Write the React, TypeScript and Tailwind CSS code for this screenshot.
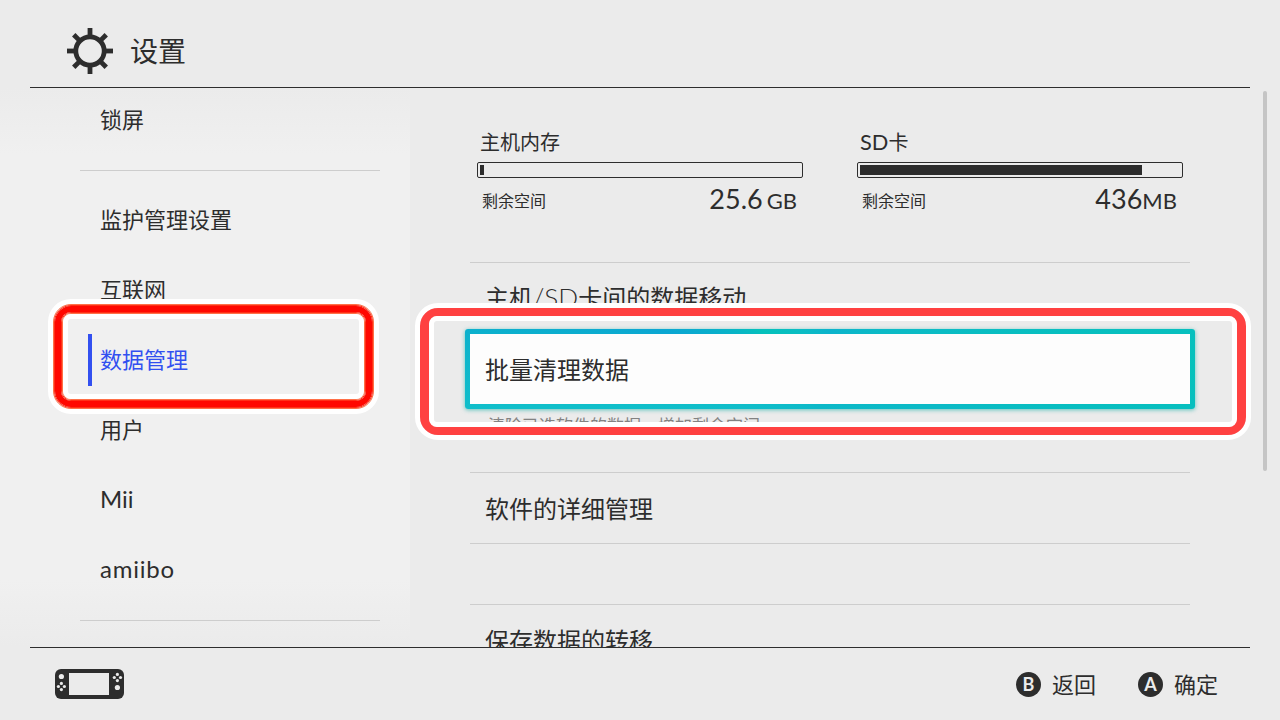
import type { ReactNode } from 'react';

function GearIcon() {
  return (
    <svg className="h-[48px] w-[48px] shrink-0" viewBox="-24 -24 48 48" fill="none" stroke="#2d2d2d">
      <circle r="14.2" strokeWidth="4.8" />
      {[0, 45, 90, 135, 180, 225, 270, 315].map((angle) => (
        <path key={angle} d="M0 -15V-23" strokeWidth="4.8" transform={`rotate(${angle})`} />
      ))}
    </svg>
  );
}

function ConsoleIcon() {
  return (
    <svg className="h-[30px] w-[69px]" viewBox="0 0 69 30">
      <rect width="69" height="30" rx="6" fill="#2d2d2d" />
      <rect x="14" y="4" width="40" height="22" fill="#ebebeb" />
      <g fill="#ebebeb">
        <circle cx="6.4" cy="7.5" r="2.6" />
        <circle cx="6.4" cy="14.4" r="1.6" />
        <circle cx="3.4" cy="17.5" r="1.6" />
        <circle cx="9.4" cy="17.5" r="1.6" />
        <circle cx="6.4" cy="20.6" r="1.6" />
        <circle cx="62.4" cy="18.5" r="2.6" />
        <circle cx="62.4" cy="5.4" r="1.6" />
        <circle cx="59.3" cy="8.5" r="1.6" />
        <circle cx="65.5" cy="8.5" r="1.6" />
        <circle cx="62.4" cy="11.6" r="1.6" />
      </g>
    </svg>
  );
}

function Latin({ children }: { children: ReactNode }) {
  return <span className="text-[1.09em] leading-none">{children}</span>;
}

function SideItem({ children, active = false }: { children: ReactNode; active?: boolean }) {
  return (
    <div className="flex h-[70px] items-center pl-2">
      <div
        className={
          active
            ? 'flex h-[52px] items-center border-l-4 border-[#3250f0] pb-[2px] pl-2 text-[22px] text-[#3250f0]'
            : 'flex h-[52px] items-center pb-[2px] pl-3 text-[22px]'
        }
      >
        {children}
      </div>
    </div>
  );
}

function Storage({ name, amount, unit, used, gap }: { name: ReactNode; amount: string; unit: string; used: number; gap: string }) {
  return (
    <div className="w-[326px]">
      <div className="h-[30px] pl-[3px] text-[20px] leading-[28px]">{name}</div>
      <div className="mt-[4px] h-4 rounded-[2px] border border-[#2d2d2d] px-[2px] py-[2px]">
        <div className="h-[10px] bg-[#2d2d2d]" style={{ width: used }} />
      </div>
      <div className="flex h-[42px] items-center justify-between pr-[6px] pl-[5px]">
        <span className="pt-[3px] text-[16px] leading-[24px]">剩余空间</span>
        <span className={`flex items-baseline pt-[2px] leading-[30px] ${gap}`}>
          <span className="text-[27px]">{amount}</span>
          <span className="text-[22px]">{unit}</span>
        </span>
      </div>
    </div>
  );
}

function PadHint({ button, label }: { button: string; label: string }) {
  return (
    <div className="flex items-center gap-[11px]">
      <span className="flex h-[25px] w-[25px] items-center justify-center rounded-full bg-[#2d2d2d] text-[18px] leading-none font-bold text-[#ebebeb]">
        {button}
      </span>
      <span className="text-[22px]">{label}</span>
    </div>
  );
}

export default function App() {
  return (
    <div className="relative flex h-[720px] w-[1280px] flex-col overflow-hidden bg-[#ebebeb] font-[Lato,'Noto_Sans_CJK_SC',sans-serif] text-[#2d2d2d]">
      <header className="mx-[30px] flex h-[88px] shrink-0 items-center border-b border-[#2d2d2d] pt-[14px] pl-9">
        <GearIcon />
        <h1 className="ml-4 text-[28px]">设置</h1>
      </header>

      <div className="flex h-[559px] shrink-0 overflow-hidden">
        <nav className="w-[410px] shrink-0 bg-[linear-gradient(to_bottom,#ebebeb,#f0f0f0_12%,#f0f0f0_88%,#ebebeb)] pr-[30px] pl-20">
          <div className="-mt-[3px] h-[86px] border-b border-[#cdcdcd]">
            <SideItem>锁屏</SideItem>
          </div>
          <div className="h-[450px] border-b border-[#cdcdcd] pt-[14px]">
            <SideItem>监护管理设置</SideItem>
            <SideItem>互联网</SideItem>
            <SideItem active>数据管理</SideItem>
            <SideItem>用户</SideItem>
            <SideItem><Latin>Mii</Latin></SideItem>
            <SideItem><span className="tracking-[0.8px]"><Latin>amiibo</Latin></span></SideItem>
          </div>
        </nav>

        <main className="w-[853px] shrink-0 pl-[60px]">
          <div className="w-[720px]">
            <section className="flex h-[175px] justify-between border-b border-[#cdcdcd] pt-[40px] pr-[7px] pl-[7px]">
              <Storage name="主机内存" amount="25.6" unit="GB" used={4} gap="gap-[4px]" />
              <Storage name={<><Latin>SD</Latin>卡</>} amount="436" unit="MB" used={282} gap="gap-0" />
            </section>
            <div className="flex h-[66px] items-center pt-[4px] pl-[15px] text-[24px]">
              <span>主机<span className="font-light"><Latin>/SD</Latin></span>卡间的数据移动</span>
            </div>
            <div className="-mx-[5px] h-20 rounded-[3px] bg-[conic-gradient(from_0deg_at_50%_50%,#0cb3cc,#0bbcc4_20%,#05c1bb_25%,#0bbac6_30%,#0cb8c8_55%,#10bfca_73%,#0cb4cb_76%,#0ba6d2_78.5%,#05c1bb_83%,#0bbcc4_90%,#0cb3cc)] p-[5px] shadow-[0_1px_4px_rgba(0,170,160,0.6)]">
              <div className="flex h-full items-center bg-[#fdfdfd] pt-[2px] pl-[15px] text-[24px]">批量清理数据</div>
            </div>
            <div className="h-[64px] border-b border-[#cdcdcd] pt-[4px] pl-[18px] text-[17px] leading-[25px] text-[#828282]">
              清除已选软件的数据，增加剩余空间。
            </div>
            <div className="flex h-[71px] items-center border-b border-[#cdcdcd] pt-[2px] pl-[15px] text-[24px]">软件的详细管理</div>
            <div className="h-[61px] border-b border-[#cdcdcd]" />
            <div className="flex h-[70px] items-center pt-[2px] pl-[15px] text-[24px]">保存数据的转移</div>
          </div>
        </main>
        <div className="mt-[3px] h-[380px] w-[4px] rounded-full bg-[#c5c5c5]" />
      </div>

      <footer className="mx-[30px] flex h-[73px] shrink-0 items-center justify-between border-t border-[#2d2d2d] pr-8 pl-[25px]">
        <ConsoleIcon />
        <div className="flex gap-[42px]">
          <PadHint button="B" label="返回" />
          <PadHint button="A" label="确定" />
        </div>
      </footer>

      <div className="pointer-events-none absolute top-[299px] left-[48px] h-[115px] w-[331px] rounded-[23px] border-5 border-white">
        <div className="h-full w-full rounded-[18px] border border-[#ff7048]">
          <div className="h-full w-full rounded-[17px] border border-[#ff3018]">
            <div className="h-full w-full rounded-[16px] border-6 border-[#ff0800]">
              <div className="h-full w-full rounded-[10px] border border-[#ff3018]">
                <div className="h-full w-full rounded-[9px] border border-[#ff7048]">
                  <div className="h-full w-full rounded-[8px] border-5 border-white" />
                </div>
              </div>
            </div>
          </div>
        </div>
      </div>
      <div className="pointer-events-none absolute top-[303px] left-[415px] h-[137px] w-[836px] rounded-[23px] border-5 border-white">
        <div className="h-full w-full rounded-[18px] border-x-[9px] border-y-8 border-[#ff4141]">
          <div className="h-full w-full rounded-[8px] border-5 border-white" />
        </div>
      </div>
    </div>
  );
}
